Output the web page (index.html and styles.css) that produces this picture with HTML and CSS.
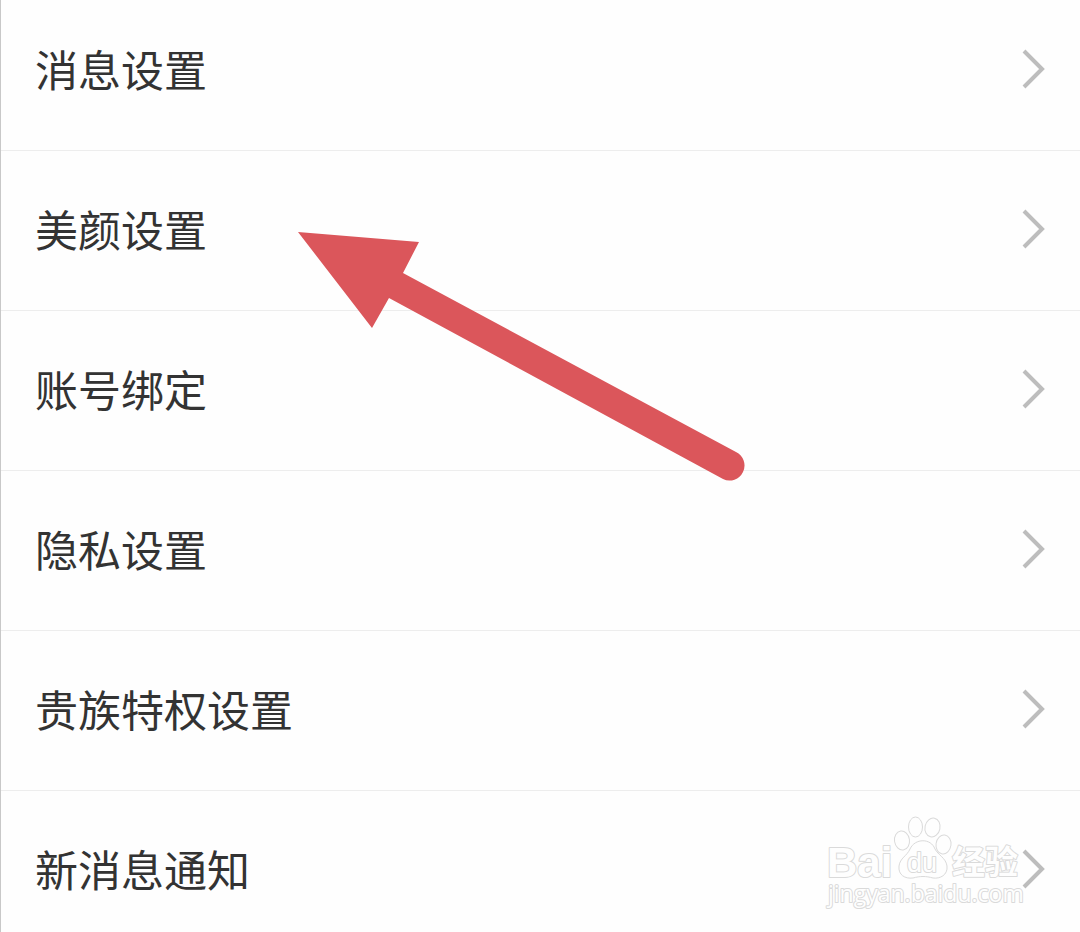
FILE: index.html
```html
<!DOCTYPE html>
<html lang="zh-CN">
<head>
<meta charset="utf-8">
<meta name="viewport" content="width=device-width, initial-scale=1">
<title>设置</title>
<link rel="stylesheet" href="styles.css">
</head>
<body>
<main class="page">
  <nav class="settings" aria-label="设置">
    <a class="row" href="#message"><span class="label">消息设置</span><svg class="chevron" viewBox="0 0 24 40" aria-hidden="true"><path d="M3 2 L21 20 L3 38"/></svg></a>
    <a class="row" href="#beauty"><span class="label">美颜设置</span><svg class="chevron" viewBox="0 0 24 40" aria-hidden="true"><path d="M3 2 L21 20 L3 38"/></svg></a>
    <a class="row" href="#account"><span class="label">账号绑定</span><svg class="chevron" viewBox="0 0 24 40" aria-hidden="true"><path d="M3 2 L21 20 L3 38"/></svg></a>
    <a class="row" href="#privacy"><span class="label">隐私设置</span><svg class="chevron" viewBox="0 0 24 40" aria-hidden="true"><path d="M3 2 L21 20 L3 38"/></svg></a>
    <a class="row" href="#noble"><span class="label">贵族特权设置</span><svg class="chevron" viewBox="0 0 24 40" aria-hidden="true"><path d="M3 2 L21 20 L3 38"/></svg></a>
    <a class="row" href="#notice"><span class="label">新消息通知</span><svg class="chevron" viewBox="0 0 24 40" aria-hidden="true"><path d="M3 2 L21 20 L3 38"/></svg></a>
  </nav>
  <svg class="pointer" viewBox="0 0 448 250" aria-hidden="true">
    <path d="M0 1 L121 11 L105 42 L438 221 A14 14 0 0 1 425 248 L91 67 L74 97 Z"/>
  </svg>
  <svg class="watermark" viewBox="0 0 200 100" role="img" aria-label="Baidu 经验">
    <text class="wm-brand" x="2" y="62">Bai</text>
    <g class="wm-paw">
      <ellipse cx="77" cy="25.500" rx="7.500" ry="9.500" transform="rotate(-8 77 25.500)"/>
      <ellipse cx="90.500" cy="12" rx="7" ry="10"/>
      <ellipse cx="107.500" cy="12.500" rx="7.500" ry="9.500" transform="rotate(12 107.500 12.500)"/>
      <ellipse cx="118.500" cy="29.500" rx="7.500" ry="9.500" transform="rotate(8 118.500 29.500)"/>
      <path d="M85 34 C90 23 106 23 110 34 C113 40 121 43 122 51 C123 60 115 64 108 63 C101 61 95 61 88 63 C80 64 73 60 74 51 C75 43 82 41 85 34 Z"/>
    </g>
    <text class="wm-du" x="82" y="57">du</text>
    <text class="wm-cn" x="127" y="59">经验</text>
    <text class="wm-url" x="3" y="87">jingyan.baidu.com</text>
  </svg>
</main>
</body>
</html>
```
FILE: styles.css
```css
* { box-sizing: border-box; }

body {
  margin: 0;
  background: #fefefe;
  font-family: "Noto Sans CJK SC", sans-serif;
}

.page {
  position: relative;
  min-height: 100vh;
  overflow: hidden;
  border-left: 1px solid #c8c8c8;
}

.settings {
  display: flex;
  flex-direction: column;
  margin-top: -9px;
}

.row {
  display: flex;
  align-items: center;
  justify-content: space-between;
  padding: 45px 35px 50px 34px;
  border-bottom: 1px solid #ededed;
  color: #333;
  text-decoration: none;
}

.row:last-child { border-bottom: 0; padding-bottom: 30px; }

.label {
  font-size: 43px;
  line-height: 64px;
}

.chevron {
  width: 24px;
  height: 40px;
  align-self: flex-start;
  margin-top: 13px;
  fill: none;
  stroke: #bdbdbd;
  stroke-width: 4;
}

.pointer {
  position: absolute;
  left: 297px;
  top: 231px;
  width: 448px;
  height: 250px;
  fill: #db565b;
}

.watermark {
  position: absolute;
  right: 55px;
  top: 815px;
  width: 200px;
  height: 100px;
  fill: #fefefe;
  stroke: #dadada;
  stroke-width: 1;
  overflow: visible;
}

.watermark text {
  paint-order: stroke;
  stroke-width: 2;
  stroke-linejoin: round;
}

.wm-brand { font: bold 42px "Liberation Sans", sans-serif; }
.wm-du { font: 27px "Liberation Sans", sans-serif; }
.wm-cn { font: bold 33px "Noto Sans CJK SC", sans-serif; }
.wm-url { font: 23px "Open Sans", sans-serif; }
```
